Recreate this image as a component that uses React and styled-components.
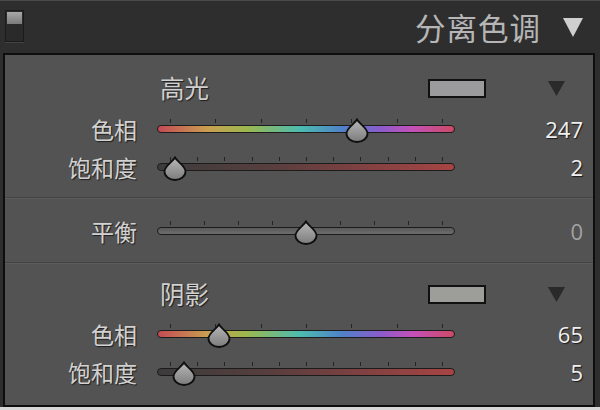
import React from "react";
import styled, { createGlobalStyle } from "styled-components";

const Global = createGlobalStyle`
  html, body { margin: 0; padding: 0; background: #d8d8d8; }
  body { font-family: "Noto Sans CJK SC", "Noto Sans", sans-serif; }
`;

const Frame = styled.div`
  width: 600px;
  height: 407px;
  background: #2e2e2e;
  box-shadow: inset 0 1px 0 #4a4a4a;
  display: flex;
  flex-direction: column;
  overflow: hidden;
`;

const Header = styled.div`
  height: 53px;
  display: flex;
  align-items: center;
  padding: 0 17px 0 5px;
  box-sizing: border-box;
`;

const Toggle = styled.div`
  width: 19px;
  height: 32px;
  margin-top: -1px;
  box-sizing: border-box;
  border: 1px solid #1b1b1b;
  background: #2a2a2a;
  display: flex;
  flex-direction: column;
  box-shadow: 0 1px 0 #444;
`;

const ToggleKnob = styled.div`
  height: 12px;
  margin: 1px;
  background: linear-gradient(#a8a8a8, #7a7a7a);
`;

const Title = styled.div`
  margin-left: auto;
  font-size: 30.5px;
  color: #b6b6b6;
  letter-spacing: 1px;
  line-height: 1;
  margin-top: 1px;
`;

const HeaderArrow = styled.svg`
  margin-left: 22px;
  width: 20px;
  height: 20px;
`;

const Panel = styled.div`
  margin-left: 3px;
  width: 592px;
  flex: 1;
  box-sizing: border-box;
  border: 2px solid #0e0e0e;
  background: #535353;
  display: flex;
  flex-direction: column;
`;

const Section = styled.div`
  display: flex;
  flex-direction: column;
  padding: ${(p) => p.$pad};
  border-top: ${(p) => (p.$divider ? "1px solid #434343" : "none")};
  box-shadow: ${(p) => (p.$divider ? "inset 0 1px 0 #5c5c5c" : "none")};
`;

const TitleRow = styled.div`
  height: 30px;
  display: flex;
  align-items: center;
  padding: 0 27px 0 155px;
  margin-bottom: ${(p) => p.$mb}px;
`;

const SectionTitle = styled.div`
  font-size: 24.5px;
  color: #d0d0d0;
  text-shadow: 1px 1px 1px #1e1e1e;
  flex: 1;
  line-height: 1;
`;

const Swatch = styled.div`
  width: 58px;
  height: 19px;
  box-sizing: border-box;
  border: 2px solid #111;
  background: ${(p) => p.$color};
  margin-right: 61px;
`;

const Row = styled.div`
  height: 38px;
  display: grid;
  grid-template-columns: 132px 298px 108px;
  column-gap: 20px;
  align-items: center;
`;

const Label = styled.div`
  text-align: right;
  font-size: 23px;
  color: #d2d2d2;
  text-shadow: 1px 1px 1px #1e1e1e;
  line-height: 1;
`;

const Value = styled.div`
  text-align: right;
  font-family: "Open Sans", "Noto Sans", sans-serif;
  font-size: 22px;
  color: ${(p) => (p.$dim ? "#a2a2a2" : "#f0f0f0")};
  text-shadow: ${(p) => (p.$dim ? "none" : "1px 1px 1px #1a1a1a")};
  line-height: 1;
  margin-left: -20px;
`;

const SliderBox = styled.div`
  position: relative;
  height: 38px;
`;

const Track = styled.div`
  position: absolute;
  left: 0;
  right: 0;
  top: 15px;
  height: 8px;
  box-sizing: border-box;
  border: 1.5px solid #1c1c1c;
  border-radius: 5px;
  background: ${(p) => p.$bg};
`;

const Tick = styled.div`
  position: absolute;
  top: 9px;
  width: 1px;
  height: 4px;
  background: #242424;
`;

const Thumb = styled.svg`
  position: absolute;
  top: 8px;
  width: 24px;
  height: 25px;
  margin-left: -12px;
`;

const HUE =
  "linear-gradient(90deg, #c44a55 0%, #c9a050 17%, #9cb84e 30%, #4cbcb0 48%, #4f82c8 62%, #8a5ccc 75%, #c450b8 86%, #cc4a66 100%)";
const SAT = "linear-gradient(90deg, #3c3c3c 0%, #5a3e3e 40%, #a84444 100%)";
const BAL = "linear-gradient(#5a5a5a, #6c6c6c)";

function Slider({ bg, ticks, value, min, max }) {
  const pos = 13 + ((value - min) / (max - min)) * 272;
  const tickList = Array.from({ length: ticks }, (_, i) => 13 + (i * 272) / (ticks - 1));
  return (
    <SliderBox>
      {tickList.map((x, i) => (
        <Tick key={i} style={{ left: x }} />
      ))}
      <Track $bg={bg} />
      <Thumb viewBox="0 0 24 25" style={{ left: pos }}>
        <defs>
          <linearGradient id="tg" x1="0" y1="0" x2="0" y2="1">
            <stop offset="0" stopColor="#b8b8b8" />
            <stop offset="1" stopColor="#7c7c7c" />
          </linearGradient>
        </defs>
        <path
          d="M12 1.5 C14 5.5 22.5 10 22.5 15.5 A10.5 8.5 0 0 1 1.5 15.5 C1.5 10 10 5.5 12 1.5 Z"
          fill="url(#tg)"
          stroke="#0f0f0f"
          strokeWidth="1.8"
        />
      </Thumb>
    </SliderBox>
  );
}

function DownArrow({ color, size }) {
  return (
    <svg width={size} height={size} viewBox="0 0 20 20">
      <polygon points="1,2 19,2 10,18" fill={color} />
    </svg>
  );
}

export default function App() {
  return (
    <>
      <Global />
      <Frame>
        <Header>
          <Toggle>
            <ToggleKnob />
          </Toggle>
          <Title>分离色调</Title>
          <HeaderArrow viewBox="0 0 20 20">
            <polygon points="0,1 20,1 10,20" fill="#cfcfcf" />
          </HeaderArrow>
        </Header>
        <Panel>
          <Section $pad="18px 0 11px">
            <TitleRow $mb={7}>
              <SectionTitle>高光</SectionTitle>
              <Swatch $color="#9b9b9d" />
              <DownArrow color="#2a2a2a" size={19} />
            </TitleRow>
            <Row>
              <Label>色相</Label>
              <Slider bg={HUE} ticks={7} value={247} min={0} max={360} />
              <Value>247</Value>
            </Row>
            <Row>
              <Label>饱和度</Label>
              <Slider bg={SAT} ticks={11} value={2} min={0} max={100} />
              <Value>2</Value>
            </Row>
          </Section>
          <Section $divider $pad="14px 0 12px">
            <Row>
              <Label>平衡</Label>
              <Slider bg={BAL} ticks={9} value={0} min={-100} max={100} />
              <Value $dim>0</Value>
            </Row>
          </Section>
          <Section $divider $pad="16px 0 0">
            <TitleRow $mb={6}>
              <SectionTitle>阴影</SectionTitle>
              <Swatch $color="#9d9e99" />
              <DownArrow color="#2a2a2a" size={19} />
            </TitleRow>
            <Row>
              <Label>色相</Label>
              <Slider bg={HUE} ticks={7} value={65} min={0} max={360} />
              <Value>65</Value>
            </Row>
            <Row>
              <Label>饱和度</Label>
              <Slider bg={SAT} ticks={11} value={5} min={0} max={100} />
              <Value>5</Value>
            </Row>
          </Section>
        </Panel>
      </Frame>
    </>
  );
}
